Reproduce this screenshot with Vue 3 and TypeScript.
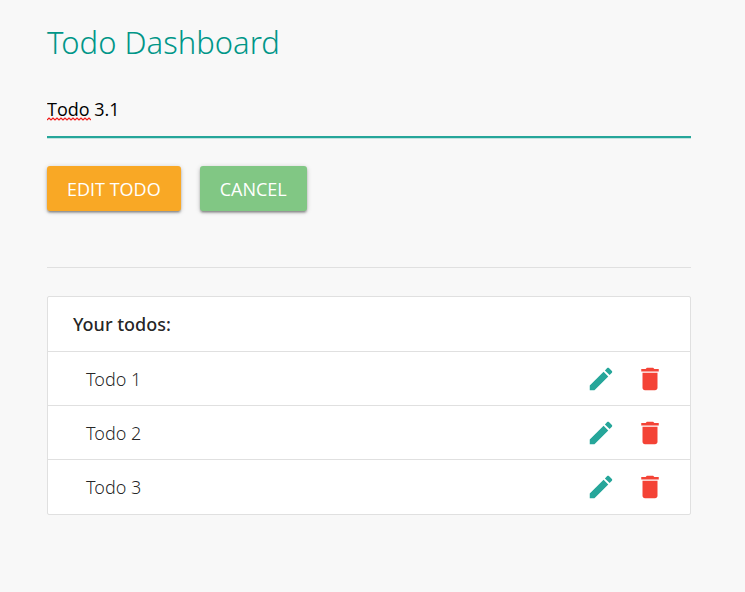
<script setup lang="ts">
import { ref } from 'vue'

interface Todo {
  id: number
  title: string
}

const todos = ref<Todo[]>([
  { id: 1, title: 'Todo 1' },
  { id: 2, title: 'Todo 2' },
  { id: 3, title: 'Todo 3' },
])
const draft = ref('Todo 3.1')
const editingId = ref<number | null>(3)

function startEdit(todo: Todo) {
  editingId.value = todo.id
  draft.value = todo.title
}

function save() {
  const todo = todos.value.find((t) => t.id === editingId.value)
  if (todo && draft.value.trim()) todo.title = draft.value.trim()
  cancel()
}

function cancel() {
  editingId.value = null
  draft.value = ''
}

function remove(id: number) {
  todos.value = todos.value.filter((t) => t.id !== id)
}
</script>

<template>
  <main class="dashboard">
    <h1 class="title">Todo Dashboard</h1>

    <form @submit.prevent="save">
      <div class="field">
        <input v-model="draft" class="field-input" type="text" aria-label="Todo" spellcheck="false" />
        <svg v-if="draft.startsWith('Todo')" class="squiggle" width="44" height="4" viewBox="0 0 44 4" aria-hidden="true">
          <path
            d="M0 3l2-2 2 2 2-2 2 2 2-2 2 2 2-2 2 2 2-2 2 2 2-2 2 2 2-2 2 2 2-2 2 2 2-2 2 2 2-2 2 2 2-2 2 2"
            fill="none"
            stroke="#f01c1c"
            stroke-width="1.2"
          />
        </svg>
      </div>
      <div class="actions">
        <button class="btn btn-edit" type="submit">Edit Todo</button>
        <button class="btn btn-cancel" type="button" @click="cancel">Cancel</button>
      </div>
    </form>

    <hr class="divider" />

    <section class="collection">
      <h2 class="collection-header">Your todos:</h2>
      <ul class="list">
        <li v-for="todo in todos" :key="todo.id" class="item">
          <span class="item-title">{{ todo.title }}</span>
          <button class="icon-btn icon-edit" type="button" aria-label="Edit" @click="startEdit(todo)">
            <svg class="icon" viewBox="0 0 24 24" aria-hidden="true">
              <path
                d="M3 17.25V21h3.75L17.81 9.94l-3.75-3.75L3 17.25zM20.71 7.04c.39-.39.39-1.02 0-1.41l-2.34-2.34c-.39-.39-1.02-.39-1.41 0l-1.83 1.83 3.75 3.75 1.83-1.83z"
              />
            </svg>
          </button>
          <button class="icon-btn icon-delete" type="button" aria-label="Delete" @click="remove(todo.id)">
            <svg class="icon" viewBox="0 0 24 24" aria-hidden="true">
              <path d="M6 19c0 1.1.9 2 2 2h8c1.1 0 2-.9 2-2V7H6v12zM19 4h-3.500l-1-1h-5l-1 1H5v2h14V4z" />
            </svg>
          </button>
        </li>
      </ul>
    </section>
  </main>
</template>

<style>
body {
  margin: 0;
  background: #f8f8f8;
}
</style>

<style scoped>
.dashboard {
  padding: 20px 54px 40px 47px;
  font-family: 'Segoe UI', 'Noto Sans', 'Open Sans', sans-serif;
  font-size: 18px;
  color: rgba(0, 0, 0, 0.87);
}

.title {
  margin: 0 0 34px;
  font-size: 31px;
  line-height: 44px;
  font-weight: 300;
  color: #009688;
}

.field {
  position: relative;
}

.field-input {
  display: block;
  box-sizing: border-box;
  width: 100%;
  height: 40px;
  padding: 0 0 16px;
  border: 0;
  border-bottom: 2px solid #26a69a;
  border-radius: 0;
  outline: 0;
  background: transparent;
  box-shadow: 0 1px 0 0 rgba(38, 166, 154, 0.25);
  font-family: 'Segoe UI', 'Open Sans', sans-serif;
  font-size: 18px;
  color: #000;
}

.squiggle {
  position: absolute;
  left: 0;
  top: 19px;
}

.actions {
  display: flex;
  gap: 19px;
  margin-top: 28px;
}

.btn {
  height: 45px;
  padding: 0 20px;
  border: 0;
  border-radius: 3px;
  font-family: 'Segoe UI', 'Open Sans', sans-serif;
  font-size: 18px;
  text-transform: uppercase;
  color: #fff;
  cursor: pointer;
  box-shadow:
    0 2px 2px 0 rgba(0, 0, 0, 0.24),
    0 3px 1px -2px rgba(0, 0, 0, 0.12),
    0 1px 5px 0 rgba(0, 0, 0, 0.2);
}

.btn-edit {
  background: #f9a825;
}

.btn-cancel {
  background: #81c784;
}

.divider {
  margin: 56px 0 28px;
  border: 0;
  border-top: 1px solid #e0e0e0;
}

.collection {
  overflow: hidden;
  border: 1px solid #e0e0e0;
  border-radius: 2px;
  background: #fff;
}

.collection-header {
  margin: 0;
  padding: 0 25px;
  border-bottom: 1px solid #e0e0e0;
  font-size: 18px;
  line-height: 54px;
  font-weight: 500;
}

.list {
  margin: 0;
  padding: 0;
  list-style: none;
}

.item {
  display: flex;
  align-items: center;
  box-sizing: border-box;
  height: 54px;
  padding: 0 25px 0 38px;
  border-bottom: 1px solid #e0e0e0;
}

.item:last-child {
  border-bottom: 0;
}

.item-title {
  flex: 1;
  font-weight: 300;
}

.icon-btn {
  display: flex;
  margin-left: 19px;
  padding: 0;
  border: 0;
  background: none;
  cursor: pointer;
}

.icon {
  width: 30px;
  height: 30px;
  fill: currentColor;
}

.icon-edit {
  color: #26a69a;
}

.icon-delete {
  color: #f44336;
}
</style>
